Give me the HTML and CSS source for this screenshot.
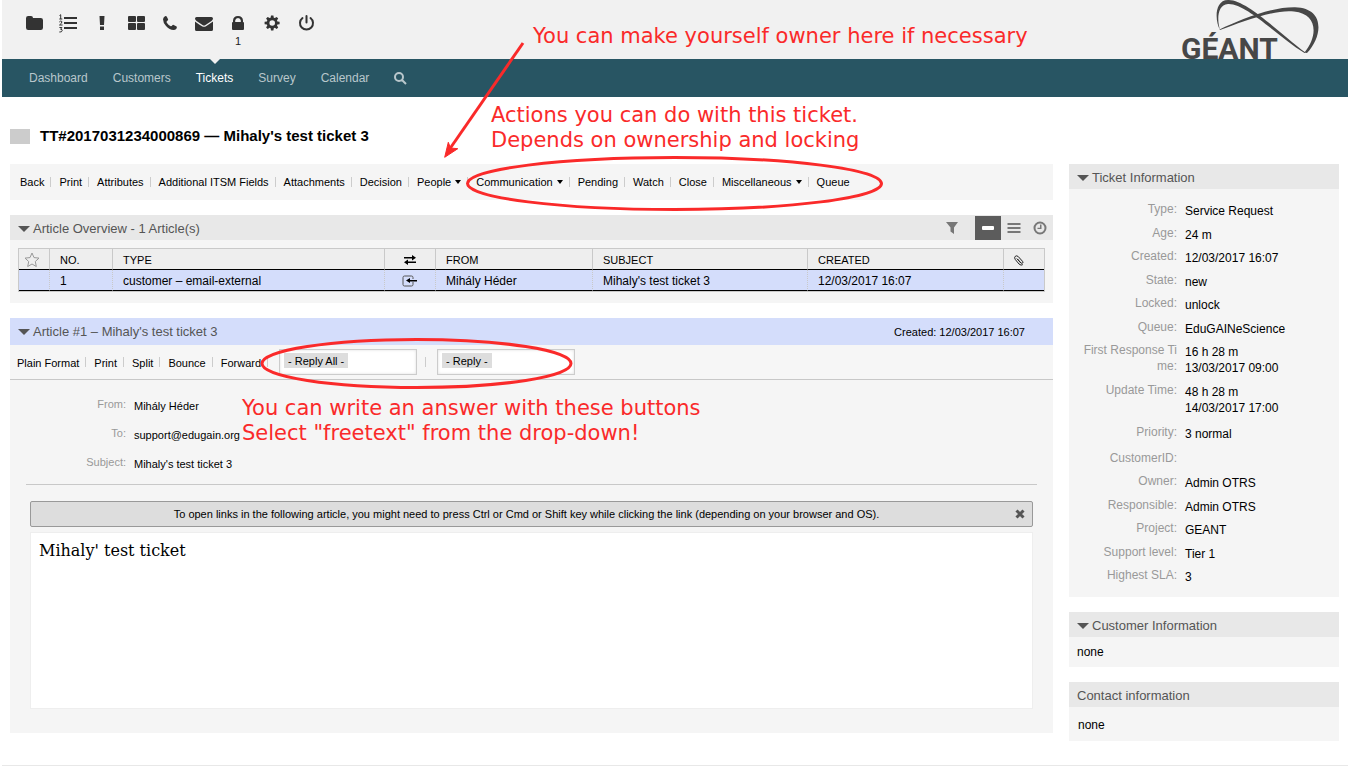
FILE: index.html
```
<!DOCTYPE html>
<html lang="en">
<head>
    <meta charset="UTF-8">
    <meta name="viewport" content="width=device-width, initial-scale=1.0">
    <title>TT#2017031234000869 - Mihaly's test ticket 3</title>
    <link rel="stylesheet" href="styles.css">
</head>
<body>
    <header class="header">
        <ul class="tool-icons">
            <li><a href="#" aria-label="Queue view"><svg width="18" height="18" viewBox="0 0 18 18"><path d="M1 4.2Q1 2 3.2 2H6q2 0 2 2h7.8Q18 4 18 6.2v7.6q0 2.2-2.2 2.2H3.2Q1 16 1 13.800z"/></svg></a></li>
            <li><a href="#" aria-label="Status view"><svg width="18" height="20" viewBox="0 0 18 20"><path d="M5 3h13v2H5zM5 8h13v2H5zM5 13h13v2H5z"/><path class="line" d="M.5 1.500l1.200-.8V5M.3 5h3M.3 8q1.300-1.500 2.500-.6Q3.500 9 .5 11H3.600M.4 13.500h2.500l-1.300 1.800q2 0 1.600 1.500T.3 18"/></svg></a></li>
            <li><a href="#" aria-label="Escalation view"><svg width="18" height="18" viewBox="0 0 18 18"><path d="M6.500 2h5L11 11H7zM7 12.500h4V16H7z"/></svg></a></li>
            <li><a href="#" aria-label="Services"><svg width="18" height="18" viewBox="0 0 18 18"><rect x="1" y="2" width="8" height="6" rx="1"/><rect x="10" y="2" width="8" height="6" rx="1"/><rect x="1" y="9" width="8" height="7" rx="1"/><rect x="10" y="9" width="8" height="7" rx="1"/></svg></a></li>
            <li><a href="#" aria-label="New phone ticket"><svg width="18" height="18" viewBox="0 0 18 18"><path d="M2 5.200Q2.300 3.200 4 2.300 5.200 1.800 5.700 2.600L7.200 5.600Q7.300 6.300 5.800 7.300 5.300 7.900 5.800 8.700 7.400 11.200 9.800 12.200 10.500 12.400 11.600 11Q12.200 10.600 12.700 10.900L15.600 12.500Q16.300 13 15.400 14.700 14.300 16 12.500 16 8.500 15.800 5 12 2 8.500 2 5.200z"/></svg></a></li>
            <li><a href="#" aria-label="New email ticket"><svg width="18" height="18" viewBox="0 0 18 18"><path d="M0 4.600Q0 3 1.600 3H16.400Q18 3 18 4.600 18 6 16.500 7L10.500 11Q9 12 7.500 11L1.500 7Q0 6 0 4.600zM0 7.500Q.5 8.200 7 12.200 9 13.300 11 12.200L18 7.500V15.400Q18 17 16.400 17H1.600Q0 17 0 15.400z"/></svg></a></li>
            <li><a href="#" aria-label="Locked tickets"><svg width="18" height="18" viewBox="0 0 18 18"><path fill-rule="evenodd" d="M4 8V6.500Q4.300 2 9 2T14 6.500V8Q15 8 15 9v6q0 1-1 1H4q-1 0-1-1V9Q3 8 4 8zM6.200 8H11.800V6.500Q11.500 4 9 4T6.200 6.500z"/></svg><span>1</span></a></li>
            <li><a href="#" aria-label="Preferences"><svg width="18" height="18" viewBox="0 0 18 18"><path fill-rule="evenodd" d="M8 1.500h2.400l.4 2.200 1 .4 1.900-1.200 1.500 1.600-1.200 1.800.4 1.100 2.200.4v2.400l-2.200.4-.4 1 1.200 1.900-1.500 1.500-1.900-1.200-1 .4-.4 2.300H8l-.4-2.300-1-.4L4.700 15l-1.600-1.500 1.200-1.900-.4-1-2.300-.4V7.800l2.300-.4.4-1.100-1.200-1.800 1.600-1.600 1.900 1.200 1-.4zM9.200 6.200a2.800 2.800 0 1 0 0 5.600 2.800 2.800 0 0 0 0-5.600z"/></svg></a></li>
            <li><a href="#" aria-label="Logout"><svg width="18" height="18" viewBox="0 0 18 18"><path class="power" d="M5.500 4A6.500 6.500 0 1 0 13.500 4M9.500 2V8.500"/></svg></a></li>
        </ul>
        <svg class="logo" width="138" height="59" viewBox="0 0 138 59" role="img" aria-label="GÉANT">
            <text x="-1" y="59">GÉANT</text>
            <path d="M38 29.800C33 22 32 0 46 0C65-.5 98 34 123.500 52.500L122.500 53C95 36 64 3 46 4C35 5 35 20 38 29.800z"/>
            <path d="M37.500 29.500C58 20 88 7 113 7.300C143 8 141 36 125 53L122.500 52.500C136 36 136 14 112 11.500C93 9 59 22 38 30z"/>
        </svg>
    </header>

    <nav class="nav">
        <a href="#">Dashboard</a>
        <a href="#">Customers</a>
        <a href="#" class="active">Tickets</a>
        <a href="#">Survey</a>
        <a href="#">Calendar</a>
        <a href="#" aria-label="Search"><svg width="13" height="13" viewBox="0 0 13 13"><path d="M9 5A4 4 0 1 1 1 5 4 4 0 0 1 9 5zM8 8l4 4"/></svg></a>
    </nav>

    <div class="headline">
        <span class="flag"></span>
        <h1>TT#2017031234000869 — Mihaly's test ticket 3</h1>
    </div>

    <div class="content">
        <main>
            <ul class="actions ticket-actions">
                <li><a href="#">Back</a></li>
                <li><a href="#">Print</a></li>
                <li><a href="#">Attributes</a></li>
                <li><a href="#">Additional ITSM Fields</a></li>
                <li><a href="#">Attachments</a></li>
                <li><a href="#">Decision</a></li>
                <li><a href="#" class="has-menu">People</a></li>
                <li><a href="#" class="has-menu">Communication</a></li>
                <li><a href="#">Pending</a></li>
                <li><a href="#">Watch</a></li>
                <li><a href="#">Close</a></li>
                <li><a href="#" class="has-menu">Miscellaneous</a></li>
                <li><a href="#">Queue</a></li>
            </ul>

            <section class="widget">
                <div class="widget-header">
                    <h2><a href="#" class="toggle">Article Overview - 1 Article(s)</a></h2>
                    <div class="view-icons">
                        <button class="filter" aria-label="Filter"><svg width="14" height="14" viewBox="0 0 14 14"><path d="M1 1h12L9 6.500V13L5.500 10.500v-4z"/></svg></button>
                        <button class="selected" aria-label="Show one article"><svg width="14" height="14" viewBox="0 0 14 14"><rect x="1" y="5" width="12" height="4" rx="1"/></svg></button>
                        <button aria-label="Show all articles"><svg width="14" height="14" viewBox="0 0 14 14"><path d="M.5 2h13v2H.5zM.5 6h13v2H.5zM.5 10h13v2H.5z"/></svg></button>
                        <button aria-label="Timeline"><svg width="14" height="14" viewBox="0 0 14 14"><path class="clock" d="M12.500 7A5.500 5.500 0 1 1 1.500 7a5.500 5.500 0 0 1 11 0z"/><path d="M7 3.500h1.500V8H4.500V6.800H7z"/></svg></button>
                    </div>
                </div>
                <div class="overview">
                    <table>
                        <colgroup>
                            <col class="col-star"><col class="col-no"><col><col class="col-direction"><col class="col-from"><col class="col-subject"><col class="col-created"><col class="col-attach">
                        </colgroup>
                        <thead>
                            <tr>
                                <th class="icon star"><svg width="16" height="16" viewBox="0 0 16 16"><path d="M8 1l2 4.600 5 .5-3.700 3.400 1 5L8 12l-4.300 2.500 1-5L1 6.100l5-.5z"/></svg></th>
                                <th>NO.</th>
                                <th>TYPE</th>
                                <th class="icon"><svg width="12" height="10" viewBox="0 0 12 10"><path d="M0 2h8V0l4 2.800L8 5.500V3.500H0zM12 6.500H4V4.500L0 7.200 4 10V8h8z"/></svg></th>
                                <th>FROM</th>
                                <th>SUBJECT</th>
                                <th>CREATED</th>
                                <th class="clip"><svg width="10" height="11" viewBox="0 0 10 11"><path d="M3.500 4l3.500 4Q8 8.800 8.700 8T8.500 6.300L4.200 1.500Q2.500.2 1.200 1.400T1.300 4.500L5 9q2.200 2 3.800.6"/><path d="M2.800 3.500l4 4.500"/></svg></th>
                            </tr>
                        </thead>
                        <tbody>
                            <tr>
                                <td></td>
                                <td>1</td>
                                <td>customer – email-external</td>
                                <td class="icon"><svg width="16" height="12" viewBox="0 0 16 12"><path class="box" d="M11 4V2.500Q11 1 9.500 1h-7Q1 1 1 2.500v7Q1 11 2.500 11h7Q11 11 11 9.500V7"/><path d="M4 5.500L8 3v2h7v1.500H8V8z"/></svg></td>
                                <td>Mihály Héder</td>
                                <td>Mihaly's test ticket 3</td>
                                <td>12/03/2017 16:07</td>
                                <td></td>
                            </tr>
                        </tbody>
                    </table>
                </div>
            </section>

            <section class="widget">
                <div class="widget-header article-header">
                    <h2><a href="#" class="toggle">Article #1 – Mihaly's test ticket 3</a></h2>
                    <span>Created: 12/03/2017 16:07</span>
                </div>
                <ul class="actions article-actions">
                    <li><a href="#">Plain Format</a></li>
                    <li><a href="#">Print</a></li>
                    <li><a href="#">Split</a></li>
                    <li><a href="#">Bounce</a></li>
                    <li><a href="#">Forward</a></li>
                    <li><select class="reply-all" aria-label="Reply all"><option>- Reply All -</option></select></li>
                    <li><select class="reply" aria-label="Reply"><option>- Reply -</option></select></li>
                </ul>
                <div class="article">
                    <dl class="fields article-fields">
                        <div><dt>From:</dt><dd>Mihály Héder</dd></div>
                        <div><dt>To:</dt><dd>support@edugain.org</dd></div>
                        <div><dt>Subject:</dt><dd>Mihaly's test ticket 3</dd></div>
                    </dl>
                    <div class="message">
                        <p>To open links in the following article, you might need to press Ctrl or Cmd or Shift key while clicking the link (depending on your browser and OS).</p>
                        <button aria-label="Close this message"><svg width="10" height="10" viewBox="0 0 10 10"><path d="M1.500 1.500l7 7M8.500 1.500l-7 7"/></svg></button>
                    </div>
                    <div class="mail-body">Mihaly' test ticket</div>
                </div>
            </section>
        </main>

        <aside>
            <section class="widget">
                <div class="widget-header"><h2><a href="#" class="toggle">Ticket Information</a></h2></div>
                <dl class="fields ticket-fields">
                    <div><dt>Type:</dt><dd>Service Request</dd></div>
                    <div><dt>Age:</dt><dd>24 m</dd></div>
                    <div><dt>Created:</dt><dd>12/03/2017 16:07</dd></div>
                    <div><dt>State:</dt><dd>new</dd></div>
                    <div><dt>Locked:</dt><dd>unlock</dd></div>
                    <div><dt>Queue:</dt><dd>EduGAINeScience</dd></div>
                    <div><dt>First Response Time:</dt><dd>16 h 28 m<br>13/03/2017 09:00</dd></div>
                    <div class="spaced"><dt>Update Time:</dt><dd>48 h 28 m<br>14/03/2017 17:00</dd></div>
                    <div class="spaced"><dt>Priority:</dt><dd>3 normal</dd></div>
                    <div><dt>CustomerID:</dt><dd>&nbsp;</dd></div>
                    <div><dt>Owner:</dt><dd>Admin OTRS</dd></div>
                    <div><dt>Responsible:</dt><dd>Admin OTRS</dd></div>
                    <div><dt>Project:</dt><dd>GEANT</dd></div>
                    <div><dt>Support level:</dt><dd>Tier 1</dd></div>
                    <div><dt>Highest SLA:</dt><dd>3</dd></div>
                </dl>
            </section>
            <section class="widget">
                <div class="widget-header"><h2><a href="#" class="toggle">Customer Information</a></h2></div>
                <p class="customer">none</p>
            </section>
            <section class="widget">
                <div class="widget-header"><h2>Contact information</h2></div>
                <p class="contact">none</p>
            </section>
        </aside>
    </div>

    <footer class="footer"></footer>

    <!-- hints drawn over the page -->
    <div class="hints">
        <svg width="900" height="400" viewBox="0 0 900 400">
            <path d="M523 43L449 150"/>
            <path class="head" d="M444.700 157.300L448.300 142.300 450.500 148 457.800 148.700z"/>
            <ellipse cx="674.500" cy="183.500" rx="207" ry="26"/>
            <ellipse cx="416.500" cy="363.500" rx="154.500" ry="24"/>
        </svg>
        <p class="hint owner-hint">You can make yourself owner here if necessary</p>
        <p class="hint actions-hint">Actions you can do with this ticket.<br>Depends on ownership and locking</p>
        <p class="hint reply-hint">You can write an answer with these buttons<br>Select "freetext" from the drop-down!</p>
    </div>
</body>
</html>
```
FILE: styles.css
```
* {
    box-sizing: border-box;
}

body {
    margin: 0 0 0 2px;
    font-family: "Liberation Sans", Arial, Helvetica, sans-serif;
    font-size: 12px;
    line-height: 16px;
    color: #000;
    background: #fff;
}

h1, h2, p, ul, dl, dd {
    margin: 0;
    padding: 0;
}

ul {
    list-style: none;
}

a {
    color: inherit;
    text-decoration: none;
}

button {
    padding: 0;
    border: none;
    background: none;
    cursor: pointer;
}

svg {
    display: block;
}

/* header */
.header {
    display: flex;
    justify-content: space-between;
    height: 59px;
    padding: 0 28px 0 15px;
    background: #f1f1f1;
}

.tool-icons {
    display: flex;
    padding-top: 14px;
}

.tool-icons a {
    display: flex;
    flex-direction: column;
    align-items: center;
    width: 34px;
    font-size: 11px;
    line-height: 12px;
    color: #222;
}

.tool-icons span {
    margin-top: 3px;
}

.tool-icons svg {
    fill: #333;
}

.tool-icons .line {
    fill: none;
    stroke: #333;
}

.tool-icons .power {
    fill: none;
    stroke: #333;
    stroke-width: 2;
    stroke-linecap: round;
}

.logo {
    overflow: visible;
    fill: #474747;
}

.logo text {
    font-family: Roboto, "Liberation Sans", sans-serif;
    font-size: 30px;
    font-weight: bold;
}

.nav {
    display: flex;
    align-items: center;
    gap: 25px;
    height: 38px;
    padding-left: 27px;
    background: #285563;
    color: #b9c7cc;
}

.nav a {
    position: relative;
}

.nav .active {
    color: #fff;
}

.nav .active::before {
    content: "";
    position: absolute;
    top: -11px;
    left: 50%;
    margin-left: -5px;
    border: 5px solid transparent;
    border-top-color: #f1f1f1;
    border-bottom: none;
}

.nav svg {
    fill: none;
    stroke: #b9c7cc;
    stroke-width: 2;
}

/* title */
.headline {
    display: flex;
    align-items: center;
    gap: 10px;
    padding: 29px 8px 18px;
}

.flag {
    width: 20px;
    height: 15px;
    background: #ccc;
}

h1 {
    font-size: 15px;
    line-height: 20px;
}

.content {
    display: flex;
    align-items: flex-start;
    gap: 16px;
    padding: 0 9px 0 8px;
}

main {
    flex: 1;
}

aside {
    width: 270px;
}

/* action bars */
.actions {
    display: flex;
    align-items: center;
    font-size: 11px;
}

.actions li {
    display: flex;
    align-items: center;
}

.actions li:not(:last-child)::after {
    content: "";
    width: 1px;
    height: 10px;
    margin: 0 8px 0 6px;
    background: #ccc;
}

.ticket-actions {
    height: 36px;
    margin-bottom: 15px;
    padding-left: 10px;
    background: #f5f5f5;
}

.has-menu::after {
    content: "";
    display: inline-block;
    margin-left: 4px;
    vertical-align: 2px;
    border: 3px solid transparent;
    border-top: 4px solid #000;
    border-bottom: none;
}

.article-actions {
    height: 35px;
    padding-left: 7px;
    background: #f6f6f6;
    border-bottom: 1px solid #c8c8c8;
}

.article-actions a {
    padding-top: 2px;
}

.actions select {
    appearance: none;
    width: 138px;
    height: 26px;
    margin: 0 2px 0 3px;
    padding: 0 8px 3px;
    border: 1px solid #ccc;
    border-radius: 0;
    font-family: inherit;
    font-size: 11px;
    color: #000;
    background: #fff linear-gradient(#ddd, #ddd) no-repeat 4px 3px;
    box-shadow: inset 0 0 3px #ddd;
}

.actions .reply-all {
    background-size: 64px 15px;
}

.actions .reply {
    background-size: 50px 15px;
}

/* widgets */
.widget {
    margin-bottom: 15px;
    background: #f5f5f5;
}

.widget-header {
    display: flex;
    align-items: center;
    justify-content: space-between;
    height: 25px;
    padding-left: 8px;
    background: #e8e8e8;
    color: #555;
}

h2 {
    padding-top: 2px;
    font-size: 13px;
    font-weight: normal;
}

.toggle {
    display: flex;
    align-items: center;
    gap: 3px;
}

.toggle::before {
    content: "";
    border: 6px solid transparent;
    border-top-color: #555;
    border-bottom: none;
}

.view-icons {
    display: flex;
    align-self: stretch;
    padding-top: 1px;
}

.view-icons button {
    display: flex;
    align-items: center;
    justify-content: center;
    width: 26px;
}

.view-icons svg {
    fill: #777;
}

.view-icons .filter {
    margin-right: 10px;
}

.view-icons .selected {
    background: #5c5c5c;
}

.view-icons .selected svg {
    fill: #fff;
}

.view-icons .clock {
    fill: none;
    stroke: #777;
    stroke-width: 2;
}

.overview {
    padding: 8px 8px 11px;
}

table {
    width: 100%;
    table-layout: fixed;
    border-collapse: separate;
    border-spacing: 0;
    border: 1px solid #c9c9c9;
}

.col-star { width: 31px; }
.col-no { width: 63px; }
.col-direction { width: 51px; }
.col-from { width: 157px; }
.col-subject { width: 215px; }
.col-created { width: 196px; }
.col-attach { width: 40px; }

th, td {
    height: 21px;
    padding: 2px 10px 0;
    text-align: left;
    border-right: 1px solid #c9c9c9;
    border-bottom: 1px solid #000;
}

th {
    font-size: 11px;
    font-weight: normal;
    background: #eee;
}

td {
    background: #d4ddfb;
    border-right-style: dotted;
}

th:last-child, td:last-child {
    border-right: none;
}

th.icon, td.icon {
    padding: 2px 0 0;
}

.icon svg {
    margin: 0 auto;
}

.star svg {
    margin: 0 5px;
    fill: none;
    stroke: #999;
}

.clip svg {
    fill: none;
    stroke: #222;
}

td .box {
    fill: none;
    stroke: #555;
}

/* article */
.article-header {
    height: 27px;
    padding-right: 28px;
    background: #d4ddfb;
}

.article-header h2 {
    padding-top: 0;
}

.article-header span {
    font-size: 11px;
    color: #000;
}

.article {
    padding: 16px 16px 24px;
}

.fields div {
    display: flex;
    gap: 8px;
}

.fields dt {
    text-align: right;
    color: #999;
    word-break: break-all;
}

.fields dd {
    padding-top: 2px;
}

.article-fields {
    padding-bottom: 12px;
    border-bottom: 1px solid #c8c8c8;
    font-size: 11px;
}

.article-fields dt {
    width: 100px;
}

.article-fields div {
    margin-bottom: 11px;
}

.article-fields div:last-child {
    margin-bottom: 0;
}

.message {
    display: flex;
    align-items: center;
    height: 26px;
    margin: 16px 4px 5px;
    padding: 0 7px;
    border: 1px solid #999;
    border-radius: 2px;
    background: #ddd;
    font-size: 11px;
}

.message p {
    flex: 1;
    text-align: center;
}

.message svg {
    fill: none;
    stroke: #555;
    stroke-width: 3;
}

.mail-body {
    min-height: 177px;
    margin: 0 4px;
    padding: 8px;
    border: 1px solid #eee;
    background: #fff;
    font-family: "DejaVu Serif", serif;
    font-size: 16px;
    line-height: 19px;
}

/* sidebar */
.ticket-fields {
    padding: 12px 10px;
}

.ticket-fields dt {
    width: 98px;
}

.ticket-fields div {
    margin-bottom: 6px;
}

.ticket-fields div:nth-child(even) {
    margin-bottom: 5px;
}

.ticket-fields .spaced:nth-child(n) {
    margin-bottom: 8px;
}

.ticket-fields div:last-child {
    margin-bottom: 0;
}

.customer {
    padding: 7px 8px;
}

.contact {
    padding: 10px 9px 8px;
}

.footer {
    margin-top: 9px;
    border-top: 1px solid #e8e8e8;
}

/* hints */
.hints {
    position: absolute;
    top: 0;
    left: 0;
    pointer-events: none;
}

.hints svg {
    fill: none;
    stroke: #fa2a2a;
    stroke-width: 3;
}

.hints .head {
    fill: #fa2a2a;
    stroke-width: 1;
}

.hint {
    position: absolute;
    font-family: "DejaVu Sans", sans-serif;
    font-size: 21px;
    line-height: 25px;
    color: #fa2a2a;
    white-space: nowrap;
}

.owner-hint {
    top: 24px;
    left: 533px;
}

.actions-hint {
    top: 103px;
    left: 491px;
}

.reply-hint {
    top: 396px;
    left: 242px;
}
```
